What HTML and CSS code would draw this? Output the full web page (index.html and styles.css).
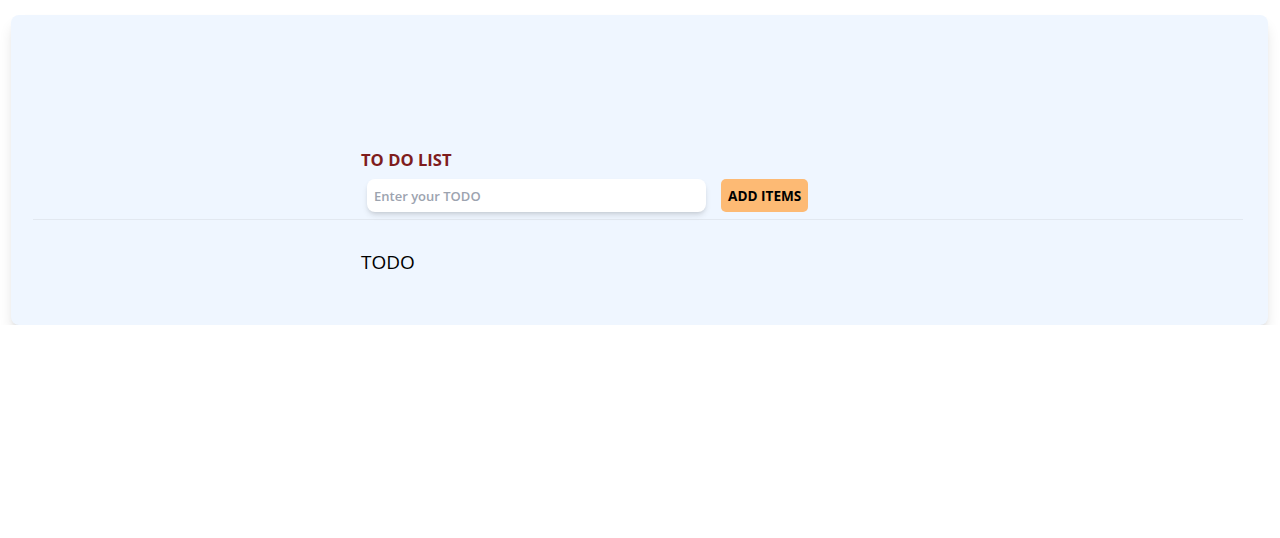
FILE: index.html
```html
<!DOCTYPE html>
<html lang="en">
<head>
<meta charset="utf-8">
<title>To Do List</title>
<link rel="stylesheet" href="styles.css">
</head>
<body>
  <main class="card">
    <section class="header">
      <h1 class="title">TO DO LIST</h1>
      <div class="form-row">
        <input class="todo-input" type="text" placeholder="Enter your TODO">
        <button class="add-btn" type="button">ADD ITEMS</button>
      </div>
    </section>
    <hr class="divider">
    <section class="list">
      <p class="list-item">TODO</p>
    </section>
  </main>
</body>
</html>
```

FILE: styles.css
```css
* { box-sizing: border-box; }
html, body { margin: 0; padding: 0; background: #ffffff; }
body {
  font-family: "Open Sans", "Noto Sans", "Liberation Sans", sans-serif;
  color: #000;
}
.card {
  margin: 15px 12px 0 11px;
  background: #eff6ff;
  border-radius: 8px;
  box-shadow: 0 10px 15px -3px rgba(0,0,0,0.14), 0 4px 6px -4px rgba(0,0,0,0.14);
  padding: 131px 0 49px 0;
}
.header { padding-left: 350px; }
.title {
  margin: 0;
  font-size: 16.6px;
  line-height: 28px;
  font-weight: 700;
  color: #7f1d1d;
}
.form-row {
  display: flex;
  align-items: center;
  gap: 15px;
  margin-top: 5px;
  padding-left: 6px;
}
.todo-input {
  width: 339px;
  height: 33px;
  border: none;
  border-radius: 8px;
  background: #fff;
  box-shadow: 0 4px 6px -1px rgba(0,0,0,0.12), 0 2px 4px -2px rgba(0,0,0,0.12);
  padding: 0 7px;
  font-family: inherit;
  font-size: 13px;
  color: #111;
  outline: none;
}
.todo-input::placeholder { color: #9ca3af; font-weight: 600; }
.add-btn {
  height: 33px;
  border: none;
  border-radius: 5px;
  background: #fdba74;
  padding: 0 7px;
  font-family: inherit;
  font-size: 13.6px;
  font-weight: 700;
  color: #000;
}
.divider {
  margin: 7px 25px 0 22px;
  border: none;
  border-top: 1px solid #e2e8f0;
  height: 0;
}
.list { padding-left: 350px; padding-top: 28px; }
.list-item {
  margin: 0;
  font-size: 19px;
  line-height: 28px;
  font-weight: 400;
}
```
